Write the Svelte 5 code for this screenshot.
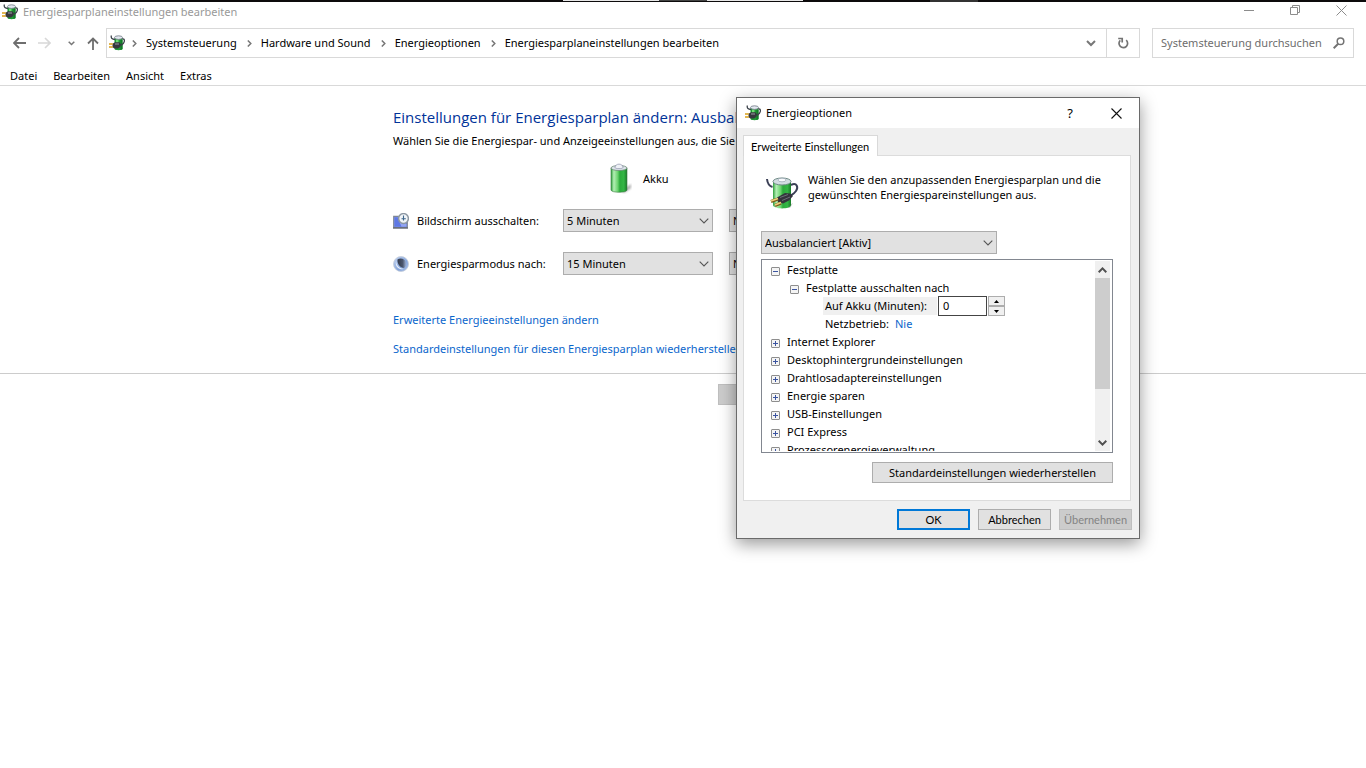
<script lang="ts">
    const crumbs = ['Systemsteuerung', 'Hardware und Sound', 'Energieoptionen', 'Energiesparplaneinstellungen bearbeiten'];
    const menu = ['Datei', 'Bearbeiten', 'Ansicht', 'Extras'];
    const times = ['1 Minute', '5 Minuten', '15 Minuten', '30 Minuten', 'Niemals'];
    const closedGroups = [
        'Internet Explorer',
        'Desktophintergrundeinstellungen',
        'Drahtlosadaptereinstellungen',
        'Energie sparen',
        'USB-Einstellungen',
        'PCI Express',
        'Prozessorenergieverwaltung'
    ];

    let displayBattery = $state('5 Minuten');
    let displayMains = $state('Niemals');
    let sleepBattery = $state('15 Minuten');
    let sleepMains = $state('Niemals');
    let diskMinutes = $state(0);
    let dialogOpen = $state(true);
    let diskOpen = $state(true);
    let offAfterOpen = $state(true);
</script>

<svelte:head>
    <title>Energiesparplaneinstellungen bearbeiten</title>
</svelte:head>

{#snippet plugSmall()}
    <svg class="plug" width="16" height="16" viewBox="0 0 16 16" aria-hidden="true">
        <path d="M5.500 3v11c0 1.600 8 1.600 8 0V3z" fill="#1f9a35" />
        <path d="M7 4.500h2.500v8H7z" fill="#6fdc72" />
        <path d="M11.500 5h2v9l-2 .8z" fill="#137a28" />
        <ellipse cx="9.500" cy="2.600" rx="4" ry="1.800" fill="#e3e8f0" stroke="#6d7681" stroke-width=".8" />
        <path d="M2.300.500c-.5 2.800 1 3.800 3.700 4M13.300 4c2.400-.6 2.600 2.300 1.200 4.200L12 10.500" fill="none" stroke="#3c424a" stroke-width="1.300" />
        <path d="M3.500 8.800 6 7.300h4.500L12 9.200l-.8 2.800L9 13.500H5.500L3.500 12.300z" fill="#35373d" />
        <path d="M6 9h4" stroke="#8a8e96" stroke-width="1.200" />
        <path d="M0 9h3.800M0 12h3.800" stroke="#d9a019" stroke-width="1.400" />
    </svg>
{/snippet}

{#snippet chevron()}
    <svg class="chevron" width="10" height="6" viewBox="0 0 10 6" aria-hidden="true">
        <path d="M.7.700 5 5 9.300.700" fill="none" stroke="#555" stroke-width="1.100" />
    </svg>
{/snippet}

{#snippet timeSelect(id: string, label: string, value: string, set: (v: string) => void)}
    <div class="select">
        <select {id} aria-label={label} {value} onchange={(e) => set(e.currentTarget.value)}>
            {#each times as t}
                <option value={t}>{t}</option>
            {/each}
        </select>
        {@render chevron()}
    </div>
{/snippet}

{#snippet toggle(open: boolean, name: string, click?: () => void)}
    <button class="toggle" aria-label={name} aria-expanded={open} onclick={click}>
        <svg width="9" height="9" viewBox="0 0 9 9" aria-hidden="true">
            <rect x=".5" y=".5" width="8" height="8" rx=".5" fill="#f4f4f4" stroke="#8e8e8e" />
            <path d={open ? 'M2 4.500h5' : 'M2 4.500h5M4.500 2v5'} stroke="#3b54a0" />
        </svg>
    </button>
{/snippet}

<div class="strip"><i></i><i></i><i></i><i></i></div>

<div class="window">
    <header class="titlebar">
        {@render plugSmall()}
        <span class="caption">Energiesparplaneinstellungen bearbeiten</span>
        <div class="winbuttons">
            <button aria-label="Minimieren">
                <svg width="11" height="11" viewBox="0 0 11 11"><path d="M0 5.500h10" stroke="#8c8c8c" /></svg>
            </button>
            <button aria-label="Wiederherstellen">
                <svg width="11" height="11" viewBox="0 0 11 11" fill="none" stroke="#8c8c8c"><path d="M.5 2.500h7v7h-7zM2.500 2.500v-2h7v7h-2" /></svg>
            </button>
            <button aria-label="Schließen">
                <svg width="11" height="11" viewBox="0 0 11 11"><path d="M.5.500l10 10M10.500.500l-10 10" stroke="#8c8c8c" /></svg>
            </button>
        </div>
    </header>

    <nav class="navbar">
        <div class="history">
            <button aria-label="Zurück">
                <svg width="13" height="12" viewBox="0 0 13 12" fill="none" stroke="#6e6e6e" stroke-width="1.800"><path d="M1 6h12M6 1 1 6l5 5" /></svg>
            </button>
            <button aria-label="Vorwärts">
                <svg width="13" height="12" viewBox="0 0 13 12" fill="none" stroke="#d8d8d8" stroke-width="1.600"><path d="M0 6h12M7 1l5 5-5 5" /></svg>
            </button>
            <button aria-label="Zuletzt besuchte Orte" class="recent">
                <svg width="7" height="5" viewBox="0 0 7 5" fill="none" stroke="#777" stroke-width="1.500"><path d="M.7.700l2.800 2.800L6.300.700" /></svg>
            </button>
            <button aria-label="Nach oben">
                <svg width="12" height="13" viewBox="0 0 12 13" fill="none" stroke="#6e6e6e" stroke-width="1.800"><path d="M6 13V1.500M1 6.500l5-5 5 5" /></svg>
            </button>
        </div>
        <div class="address">
            {@render plugSmall()}
            <ol>
                {#each crumbs as crumb}
                    <li>
                        <svg width="5" height="7" viewBox="0 0 5 7" fill="none" stroke="#777" stroke-width="1.500"><path d="M.8.500l3 3-3 3" /></svg>
                        <a href="#top">{crumb}</a>
                    </li>
                {/each}
            </ol>
            <button class="drop" aria-label="Vorherige Orte">
                <svg width="10" height="7" viewBox="0 0 10 7" fill="none" stroke="#777" stroke-width="2"><path d="M1 1l4 4 4-4" /></svg>
            </button>
            <button class="reload" aria-label="Aktualisieren">
                <svg width="12" height="12" viewBox="0 0 12 12" fill="none" stroke="#737373" stroke-width="1.700"><path d="M9.200 3.200A4.300 4.300 0 1 1 3.300 3.300M1.200 1.500h4v4" /></svg>
            </button>
        </div>
        <label class="search">
            <input type="text" placeholder="Systemsteuerung durchsuchen" aria-label="Systemsteuerung durchsuchen" />
            <svg width="12" height="12" viewBox="0 0 12 12" fill="none" stroke="#737373" stroke-width="1.500"><circle cx="7.500" cy="4.300" r="3.300" /><path d="M5.200 6.800.700 11.200" stroke-width="2" /></svg>
        </label>
    </nav>

    <div class="menu">
        {#each menu as item}
            <button>{item}</button>
        {/each}
    </div>

    <main>
        <div class="column">
            <h1>Einstellungen für Energiesparplan ändern: Ausbalanciert</h1>
            <p>Wählen Sie die Energiespar- und Anzeigeeinstellungen aus, die Sie für den Computer verwenden möchten.</p>

            <div class="grid">
                <div class="source">
                    <svg width="24" height="32" viewBox="0 0 24 32" aria-hidden="true">
                        <defs>
                            <linearGradient id="cell">
                                <stop offset="0" stop-color="#2f9f3d" />
                                <stop offset=".18" stop-color="#b4efb5" />
                                <stop offset=".42" stop-color="#6bd36f" />
                                <stop offset=".55" stop-color="#2cab3c" />
                                <stop offset=".8" stop-color="#34b645" />
                                <stop offset="1" stop-color="#1a7a29" />
                            </linearGradient>
                            <filter id="soft"><feGaussianBlur stdDeviation="1.300" /></filter>
                        </defs>
                        <path d="M13 28l9-7v4l-7 5z" fill="#777" opacity=".6" filter="url(#soft)" />
                        <path d="M2 5v22c0 3 16 3 16 0V5z" fill="url(#cell)" stroke="#3c7a43" stroke-width=".6" />
                        <ellipse cx="10" cy="5" rx="8" ry="2.500" fill="#dde3ea" stroke="#6f8a78" stroke-width=".8" />
                        <path d="M6 4.500c0-4.500 8-4.500 8 0 0 1.500-8 1.500-8 0z" fill="#eef1f6" stroke="#8b8fa8" stroke-width=".7" />
                    </svg>
                    <span>Akku</span>
                </div>

                <label class="setting" for="display-battery">
                    <svg width="16" height="16" viewBox="0 0 16 16" aria-hidden="true">
                        <path d="M.8 3.500h13.400v11H.8z" fill="#5f76e6" stroke="#7f8794" stroke-width="1.400" />
                        <path d="M1.500 4.300h3L13.500 11v2.800h-12z" fill="#93a6f5" />
                        <path d="M1.500 4.300h3l4 9.500h-7z" fill="#5f78e4" />
                        <path d="M0 15h15" stroke="#5c6270" stroke-width="1.200" />
                        <circle cx="10.500" cy="5.500" r="4.900" fill="#f1f5f8" stroke="#8d98a3" stroke-width="1.500" />
                        <path d="M10.500 2.500v5M8.500 5.700h4.300" fill="none" stroke="#3f668b" stroke-width="1.100" />
                    </svg>
                    Bildschirm ausschalten:
                </label>
                {@render timeSelect('display-battery', 'Bildschirm ausschalten, Akku', displayBattery, (v) => (displayBattery = v))}
                {@render timeSelect('display-mains', 'Bildschirm ausschalten, Netzbetrieb', displayMains, (v) => (displayMains = v))}

                <label class="setting" for="sleep-battery">
                    <svg width="16" height="16" viewBox="0 0 16 16" aria-hidden="true">
                        <defs>
                            <linearGradient id="moon" x2="1" y2="1">
                                <stop offset="0" stop-color="#c3d4f2" />
                                <stop offset=".6" stop-color="#86a6dc" />
                                <stop offset="1" stop-color="#a9bfe6" />
                            </linearGradient>
                            <linearGradient id="night">
                                <stop offset="0" stop-color="#323a4b" />
                                <stop offset=".6" stop-color="#4b566e" />
                                <stop offset="1" stop-color="#9fb3d8" />
                            </linearGradient>
                        </defs>
                        <circle cx="8" cy="8" r="7.500" fill="url(#moon)" stroke="#c3ccd9" stroke-width=".8" />
                        <path d="M4.500 3.500C7 1.500 12 2.500 13 6c.8 3-.5 5-2 6-3.500-.5-7-3.500-6.500-8.500z" fill="url(#night)" />
                        <path d="M3.200 4.500c-.2 4.500 2.800 8 7.300 8.300-4 2-9.300-2.300-7.300-8.300z" fill="#e6eefb" />
                    </svg>
                    Energiesparmodus nach:
                </label>
                {@render timeSelect('sleep-battery', 'Energiesparmodus nach, Akku', sleepBattery, (v) => (sleepBattery = v))}
                {@render timeSelect('sleep-mains', 'Energiesparmodus nach, Netzbetrieb', sleepMains, (v) => (sleepMains = v))}
            </div>

            <div class="links">
                <a href="#advanced" onclick={() => (dialogOpen = true)}>Erweiterte Energieeinstellungen ändern</a>
                <a href="#defaults">Standardeinstellungen für diesen Energiesparplan wiederherstellen</a>
            </div>
        </div>
    </main>

    <footer>
        <div class="column actions">
            <button class="push save" disabled>Änderungen speichern</button>
            <button class="push">Abbrechen</button>
        </div>
    </footer>
</div>

{#if dialogOpen}
    <div class="dialog" role="dialog" aria-label="Energieoptionen">
        <div class="dialog-title">
            {@render plugSmall()}
            <span>Energieoptionen</span>
            <button class="help" aria-label="Hilfe">?</button>
            <button class="close" aria-label="Schließen" onclick={() => (dialogOpen = false)}>
                <svg width="11" height="11" viewBox="0 0 11 11"><path d="M.5.500l10 10M10.500.500l-10 10" stroke="#111" stroke-width="1.100" /></svg>
            </button>
        </div>

        <div class="dialog-body">
            <div role="tablist" class="tabs">
                <button role="tab" aria-selected="true">Erweiterte Einstellungen</button>
            </div>

            <div class="panel" role="tabpanel">
                <div class="intro">
                    <svg width="34" height="34" viewBox="0 0 34 34" aria-hidden="true">
                        <path d="M18 32l9-5 3-5-6 10z" fill="#999" opacity=".5" />
                        <path d="M7 6v23c0 4.500 18 4.500 18 0V6z" fill="url(#cell)" />
                        <ellipse cx="16" cy="5.500" rx="9" ry="3.500" fill="#d3dde2" stroke="#6f8a85" />
                        <ellipse cx="16" cy="4" rx="4" ry="1.800" fill="#f8fafc" stroke="#98a4b0" stroke-width=".7" />
                        <path d="M1 3c.5 5 2 7 5.500 8M25 9c6-3 7.500 2.500 5 6s-5 4-7 6" fill="none" stroke="#3a3f55" stroke-width="2" />
                        <path d="M11 21.500 19 17l5 .5 3 2.500-4 4.500-6 3-5-1.500z" fill="#34343c" />
                        <path d="M14 21.500l8-3M16 24.500l8-3.500" stroke="#6d7078" />
                        <path d="M5 25.500l7-2.500M9 29.500l6-2.500" stroke="#7b5a18" stroke-width="3" />
                        <path d="M5 25l7-2.500M9 29l6-2.500" stroke="#f1cf7a" stroke-width="1.800" />
                    </svg>
                    <p>Wählen Sie den anzupassenden Energiesparplan und die gewünschten Energiespareinstellungen aus.</p>
                </div>

                <div class="select plan">
                    <select aria-label="Energiesparplan">
                        <option>Ausbalanciert [Aktiv]</option>
                        <option>Energiesparmodus</option>
                        <option>Höchstleistung</option>
                    </select>
                    {@render chevron()}
                </div>

                <div class="treebox">
                    <ul class="tree">
                        <li>
                            <div class="row">{@render toggle(diskOpen, 'Festplatte', () => (diskOpen = !diskOpen))}<span>Festplatte</span></div>
                            {#if diskOpen}
                                <ul>
                                    <li>
                                        <div class="row">{@render toggle(offAfterOpen, 'Festplatte ausschalten nach', () => (offAfterOpen = !offAfterOpen))}<span>Festplatte ausschalten nach</span></div>
                                        {#if offAfterOpen}
                                            <ul>
                                                <li class="row">
                                                    <label class="selected" for="disk-minutes">Auf Akku (Minuten):</label>
                                                    <div class="spinner">
                                                        <input id="disk-minutes" type="text" inputmode="numeric" bind:value={diskMinutes} />
                                                        <div class="arrows">
                                                            <button aria-label="Mehr" onclick={() => diskMinutes++}><svg width="5" height="3" viewBox="0 0 5 3"><path d="M0 3l2.500-3L5 3z" /></svg></button>
                                                            <button aria-label="Weniger" onclick={() => (diskMinutes = Math.max(0, diskMinutes - 1))}><svg width="5" height="3" viewBox="0 0 5 3"><path d="M0 0l2.500 3L5 0z" /></svg></button>
                                                        </div>
                                                    </div>
                                                </li>
                                                <li class="row"><span>Netzbetrieb:</span><a class="value" href="#mains">Nie</a></li>
                                            </ul>
                                        {/if}
                                    </li>
                                </ul>
                            {/if}
                        </li>
                        {#each closedGroups as name}
                            <li class="row">{@render toggle(false, name)}<span>{name}</span></li>
                        {/each}
                    </ul>
                    <div class="scrollbar">
                        <button aria-label="Nach oben blättern"><svg width="9" height="6" viewBox="0 0 9 6" fill="none" stroke="#505050" stroke-width="2"><path d="M.7 5.200l3.800-3.800 3.800 3.800" /></svg></button>
                        <div class="track"><div class="thumb"></div></div>
                        <button aria-label="Nach unten blättern"><svg width="9" height="6" viewBox="0 0 9 6" fill="none" stroke="#505050" stroke-width="2"><path d="M.7.800l3.800 3.800L8.300.800" /></svg></button>
                    </div>
                </div>

                <button class="push restore">Standardeinstellungen wiederherstellen</button>
            </div>

            <div class="dialog-actions">
                <button class="push default" onclick={() => (dialogOpen = false)}>OK</button>
                <button class="push" onclick={() => (dialogOpen = false)}>Abbrechen</button>
                <button class="push" disabled>Übernehmen</button>
            </div>
        </div>
    </div>
{/if}

<style>
    :global(body) {
        background: #fff;
        color: #000;
        font: 11px/18px 'Segoe UI', 'Noto Sans', 'Open Sans', sans-serif;
        overflow: hidden;
    }

    button, input, select {
        font: inherit;
        color: inherit;
        margin: 0;
        padding: 0;
        border: 0;
        border-radius: 0;
        background: none;
    }

    button {
        display: flex;
        align-items: center;
        justify-content: center;
        white-space: nowrap;
    }

    ul, ol {
        list-style: none;
        margin: 0;
        padding: 0;
    }

    svg {
        flex: none;
        display: block;
    }

    a {
        text-decoration: none;
        color: #0a66cc;
    }

    /* the taskbar edge above the window */
    .strip {
        display: flex;
        height: 2px;
        background: #0d0b0c;
        padding-left: 563px;
    }

    .strip i {
        height: 1px;
        width: 96px;
        background: #e8e8e8;
    }

    .strip i:nth-child(2) {
        width: 48px;
        background: #444;
    }

    .strip i:nth-child(4) {
        width: 48px;
        height: 2px;
        margin-left: 127px;
        background: #333;
    }

    .titlebar {
        display: flex;
        align-items: center;
        height: 20px;
        padding: 0 2px;
        color: #999;
    }

    .caption {
        flex: 1;
        margin-left: 5px;
    }

    .winbuttons {
        display: flex;
        align-self: flex-start;
    }

    .winbuttons button {
        width: 46px;
        height: 17px;
    }

    .navbar {
        display: flex;
        height: 30px;
        margin-top: 6px;
        padding-right: 12px;
    }

    .history {
        display: flex;
        align-items: center;
        justify-content: space-between;
        width: 86px;
        padding: 0 7px 0 13px;
    }

    .recent {
        padding-left: 4px;
    }

    .address {
        display: flex;
        flex: 1;
        align-items: center;
        box-sizing: border-box;
        border: 1px solid #d9d9d9;
        padding-left: 2px;
    }

    .address ol {
        display: flex;
        flex: 1;
        margin-left: 7px;
    }

    .address li {
        display: flex;
        align-items: center;
        gap: 9px;
        margin-right: 10px;
    }

    .address a {
        color: #000;
        white-space: nowrap;
    }

    .drop {
        width: 30px;
        height: 28px;
    }

    .reload {
        width: 33px;
        height: 28px;
        border-left: 1px solid #d9d9d9;
    }

    .search {
        display: flex;
        align-items: center;
        box-sizing: border-box;
        width: 202px;
        margin-left: 12px;
        padding: 0 8px;
        border: 1px solid #d9d9d9;
    }

    .search input {
        flex: 1;
        min-width: 0;
        outline: none;
    }

    .search input::placeholder {
        color: #6d6d6d;
    }

    .menu {
        display: flex;
        gap: 16px;
        height: 27px;
        padding-left: 10px;
        border-bottom: 1px solid #d9d9d9;
    }

    .menu button {
        padding-top: 8px;
    }

    .column {
        width: 580px;
        max-width: 100%;
        margin: 0 auto;
    }

    main {
        padding: 20px 0 15px;
    }

    h1 {
        margin: 0;
        font-family: 'Segoe UI', 'Open Sans', sans-serif;
        font-size: 15px;
        line-height: 22px;
        font-weight: 400;
        color: #003399;
        white-space: nowrap;
    }

    .column p {
        margin: 4px 0 0;
        white-space: nowrap;
    }

    .grid {
        display: grid;
        grid-template-columns: 154px 150px 150px;
        column-gap: 16px;
        row-gap: 20px;
        align-items: center;
        margin-top: 16px;
    }

    .source {
        grid-column: 2 / 4;
        display: flex;
        align-items: center;
        gap: 10px;
        height: 26px;
        margin: 0 0 -3px 46px;
    }

    .setting {
        display: flex;
        align-items: center;
        gap: 8px;
        white-space: nowrap;
    }

    .select {
        display: grid;
        align-items: center;
    }

    .select select {
        grid-area: 1 / 1;
        appearance: none;
        width: 100%;
        height: 23px;
        padding: 0 24px 0 3px;
        border: 1px solid #adadad;
        background: #e1e1e1;
    }

    .select .chevron {
        grid-area: 1 / 1;
        justify-self: end;
        margin-right: 4px;
        pointer-events: none;
    }

    .links {
        display: flex;
        flex-direction: column;
        align-items: flex-start;
        gap: 11px;
        margin-top: 36px;
        white-space: nowrap;
    }

    footer {
        border-top: 1px solid #ccc;
        padding-top: 10px;
    }

    .actions {
        display: flex;
        justify-content: flex-end;
        gap: 8px;
    }

    .push {
        box-sizing: border-box;
        width: 73px;
        height: 21px;
        border: 1px solid #adadad;
        background: #e1e1e1;
    }

    .push:disabled {
        border-color: #bfbfbf;
        background: #ccc;
        color: #838383;
    }

    .actions .push {
        width: 82px;
    }

    .actions .save {
        width: 165px;
    }

    .dialog {
        position: absolute;
        left: 736px;
        top: 97px;
        box-sizing: border-box;
        width: 404px;
        border: 1px solid #6a6a6a;
        background: #f0f0f0;
        box-shadow: 0 5px 16px rgba(0, 0, 0, 0.4);
    }

    .dialog-title {
        display: flex;
        align-items: center;
        height: 30px;
        padding-left: 8px;
        background: #fff;
    }

    .dialog-title span {
        flex: 1;
        margin-left: 5px;
    }

    .dialog-title button {
        width: 46px;
        height: 30px;
    }

    .dialog-title .help {
        font-size: 13px;
    }

    .dialog-body {
        padding: 7px 7px 8px 6px;
    }

    .tabs {
        display: flex;
    }

    .tabs button {
        height: 21px;
        margin-bottom: -1px;
        padding: 0 8px 0 7px;
        border: 1px solid #d9d9d9;
        border-bottom: 0;
        background: #fff;
        font: 11px Lato, 'Liberation Sans', sans-serif;
        z-index: 1;
    }

    .panel {
        padding: 16px 17px 17px;
        border: 1px solid #dcdcdc;
        margin-right: 1px;
        background: #fff;
    }

    .intro {
        display: flex;
        gap: 8px;
        padding: 0 0 0 5px;
        height: 59px;
    }

    .intro svg {
        margin-top: 4px;
    }

    .intro p {
        margin: 0;
        line-height: 15px;
    }

    .plan {
        width: 236px;
    }

    .treebox {
        display: flex;
        box-sizing: border-box;
        height: 194px;
        margin-top: 5px;
        padding: 1px 2px 1px 9px;
        border: 1px solid #828790;
    }

    .tree {
        flex: 1;
        overflow: hidden;
    }

    .tree ul {
        padding-left: 19px;
    }

    .tree ul ul {
        padding-left: 33px;
    }

    .row {
        display: flex;
        align-items: center;
        height: 18px;
        white-space: nowrap;
    }

    .toggle {
        width: 9px;
        height: 9px;
        margin: 2px 7px 0 0;
    }

    .selected {
        box-sizing: border-box;
        min-width: 114px;
        background: #f0f0f0;
        padding: 0 4px 0 2px;
    }

    .tree ul ul .row > span {
        padding-left: 2px;
    }

    .value {
        margin-left: 6px;
    }

    .spinner {
        display: flex;
        gap: 1px;
        margin-left: 1px;
    }

    .spinner input {
        box-sizing: border-box;
        width: 49px;
        height: 20px;
        padding: 0 4px 2px;
        border: 1px solid #444;
        background: #fff;
        outline: none;
    }

    .arrows {
        display: flex;
        flex-direction: column;
        width: 17px;
        height: 20px;
    }

    .arrows button {
        flex: 1;
        border: 1px solid #adadad;
        background: #f0f0f0;
    }

    .scrollbar {
        display: flex;
        flex-direction: column;
        width: 15px;
        background: #f0f0f0;
    }

    .scrollbar button {
        height: 17px;
    }

    .track {
        flex: 1;
    }

    .thumb {
        height: 71%;
        background: #cdcdcd;
    }

    .restore {
        width: 241px;
        margin: 9px 0 0 auto;
    }

    .dialog-actions {
        display: flex;
        justify-content: flex-end;
        gap: 8px;
        margin-top: 8px;
        font: 11px Lato, 'Liberation Sans', sans-serif;
    }

    .default {
        border: 2px solid #0078d7;
    }
</style>
